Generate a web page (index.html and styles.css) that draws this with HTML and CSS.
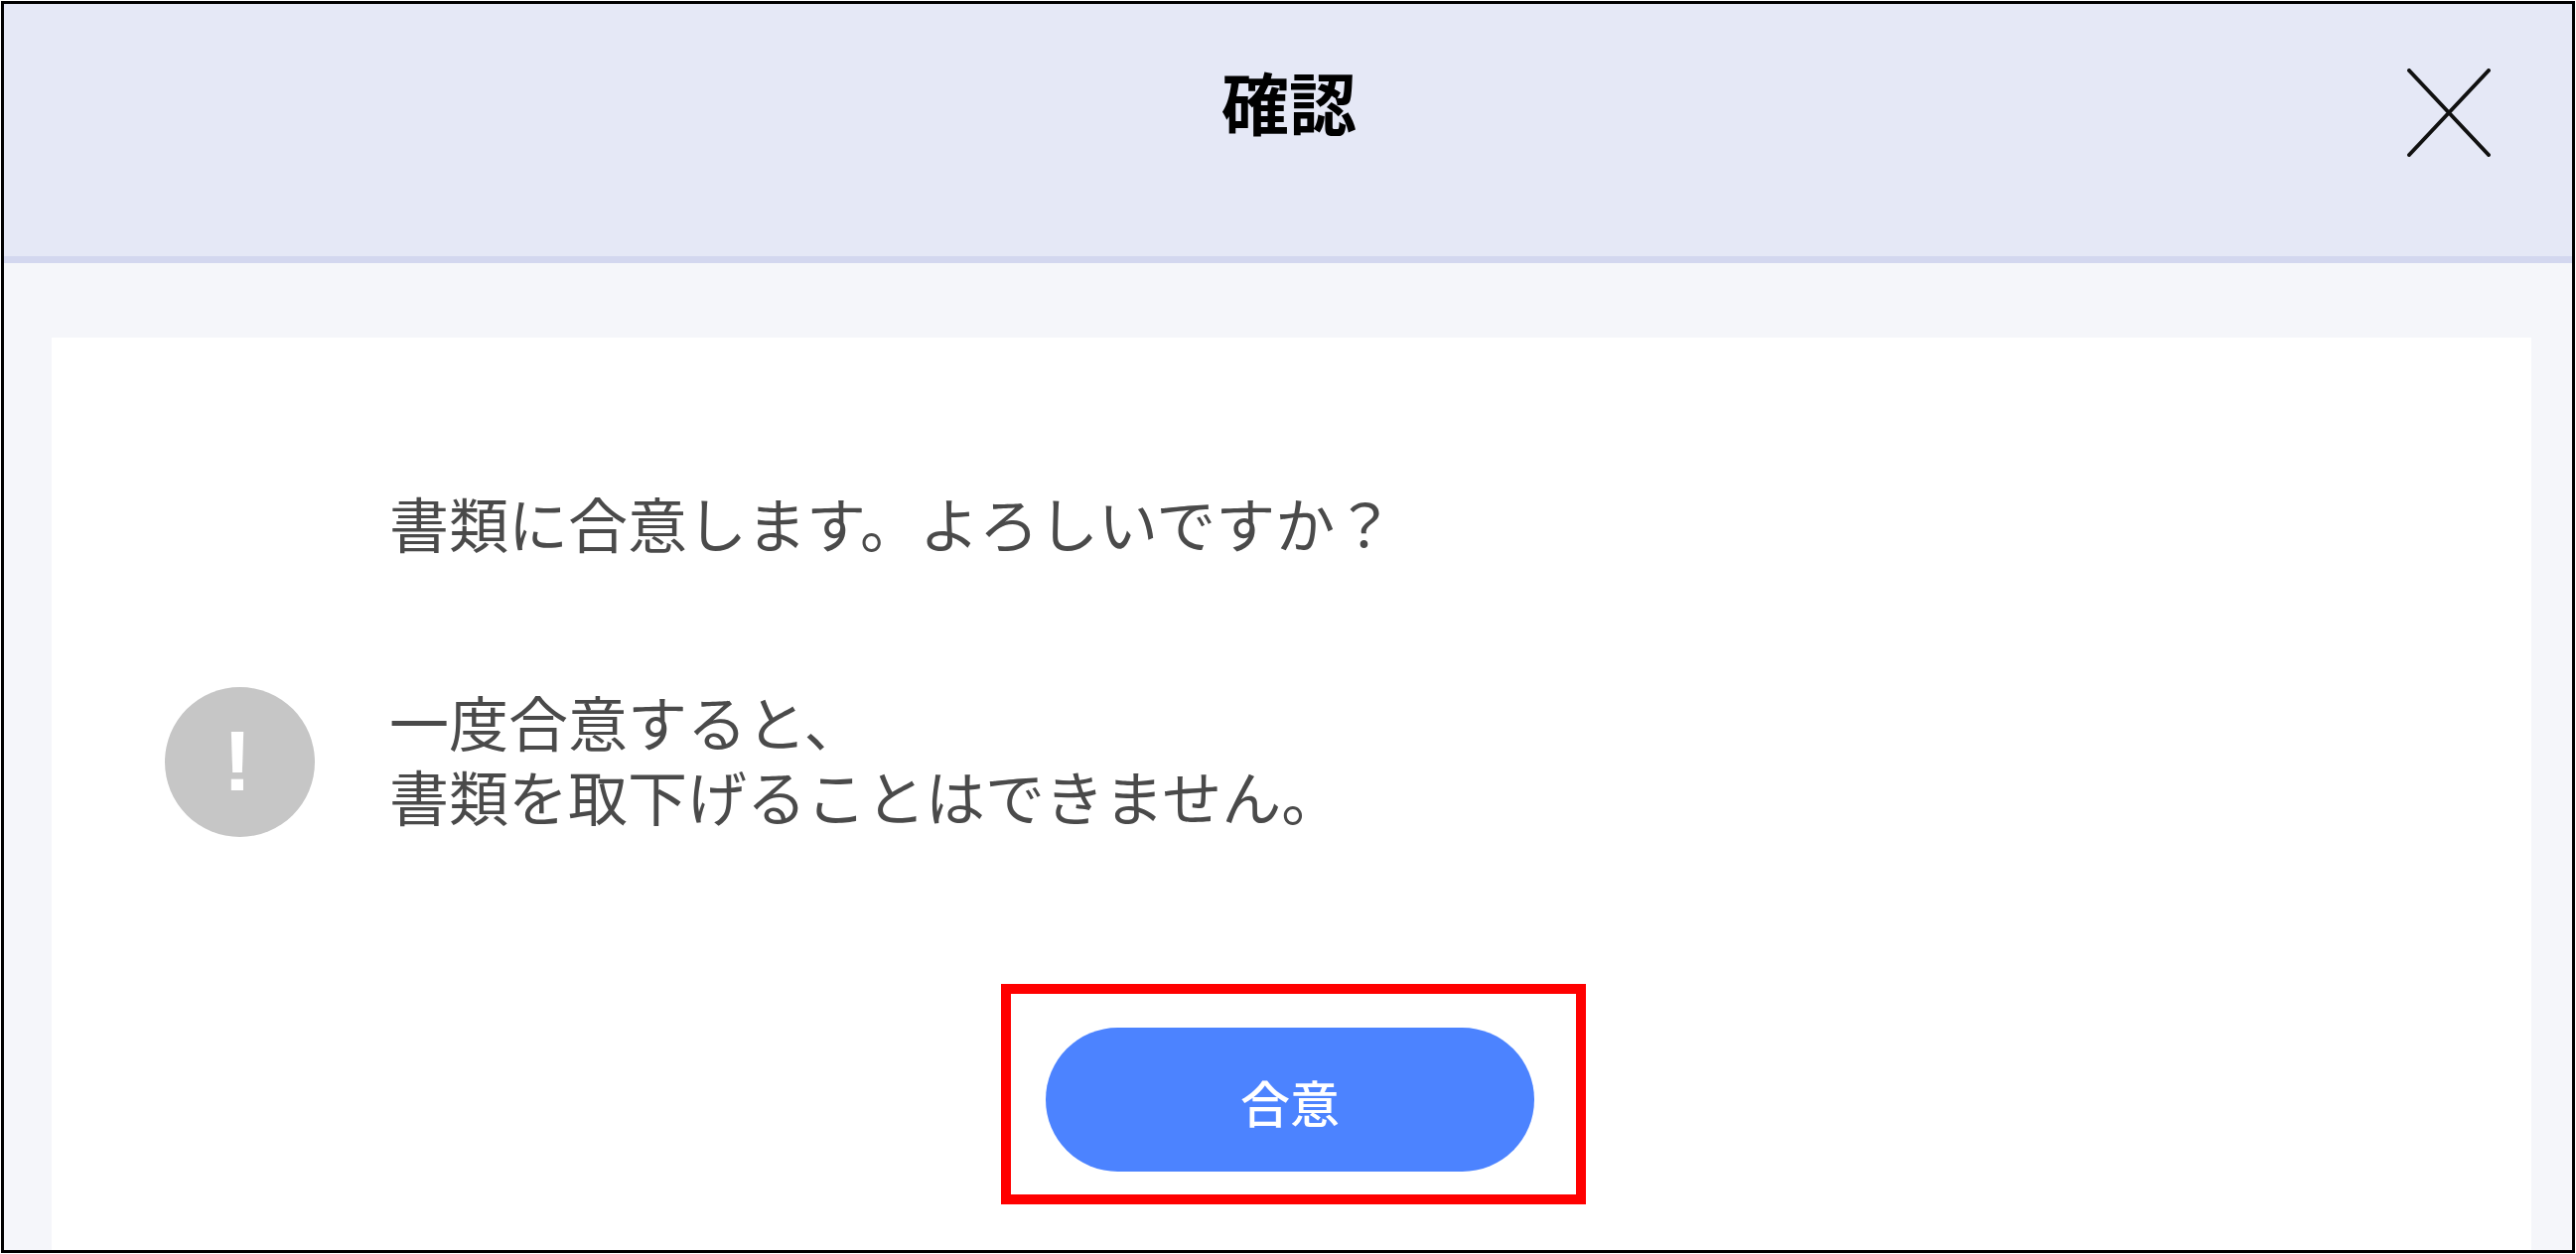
FILE: index.html
```html
<!DOCTYPE html>
<html lang="ja">
<head>
<meta charset="utf-8">
<title>確認</title>
<link rel="stylesheet" href="styles.css">
</head>
<body>
<div class="dialog">
  <header class="header">
    <h1 class="title">確認</h1>
    <button class="close" type="button" aria-label="閉じる">
      <svg class="close-icon" viewBox="0 0 84 89" aria-hidden="true">
        <path d="M2 2 L82 87 M82 2 L2 87"/>
      </svg>
    </button>
  </header>
  <main class="body">
    <section class="panel">
      <p class="message lead">書類に合意します。よろしいですか？</p>
      <div class="notice">
        <span class="notice-icon">!</span>
        <p class="message">一度合意すると、<br>書類を取下げることはできません。</p>
      </div>
      <div class="actions">
        <div class="highlight-wrap">
          <button class="agree" type="button">合意</button>
          <span class="highlight"></span>
        </div>
      </div>
    </section>
  </main>
</div>
</body>
</html>
```
FILE: styles.css
```css
* { box-sizing: border-box; }
html, body { margin: 0; height: 100%; background: #fff; }
body {
  padding: 1px;
  font-family: "Noto Sans CJK JP", "Noto Sans", sans-serif;
  overflow: hidden;
}
.dialog {
  display: flex;
  flex-direction: column;
  width: 2592px;
  height: 1261px;
  border: 3px solid #000;
  background: #f5f6fa;
  overflow: hidden;
}
.header {
  display: grid;
  grid-template-columns: 1fr auto 1fr;
  align-items: start;
  flex: none;
  height: 261px;
  background: #e5e8f6;
  border-bottom: 7px solid #d3d7ef;
}
.title {
  grid-column: 2;
  margin: 52px 0 0 2px;
  font-size: 68px;
  line-height: 92px;
  font-weight: 700;
  color: #000;
}
.close {
  grid-column: 3;
  justify-self: end;
  margin: 65px 82px 0 0;
  padding: 0;
  width: 84px;
  height: 89px;
  border: 0;
  background: none;
}
.close-icon {
  display: block;
  width: 84px;
  height: 89px;
  fill: none;
  stroke: #111;
  stroke-width: 4;
  stroke-linecap: round;
}
.body {
  flex: 1;
  display: flex;
  min-height: 0;
  padding: 75px 41px 0 48px;
}
.panel {
  flex: 1;
  display: flex;
  flex-direction: column;
  padding: 148px 0 0 114px;
  background: #fff;
}
.message {
  margin: 0;
  font-size: 60px;
  line-height: 75px;
  font-weight: 400;
  color: #4a4a4a;
}
.lead { margin-left: 226px; }
.notice {
  display: flex;
  align-items: flex-start;
  gap: 75px;
  margin-top: 125px;
}
.notice-icon {
  display: flex;
  flex: none;
  align-items: center;
  justify-content: center;
  width: 151px;
  height: 151px;
  margin-top: 4px;
  padding: 0 5px 3px 0;
  border-radius: 50%;
  background: #c6c6c6;
  color: #fff;
  font-family: "Liberation Sans", sans-serif;
  font-size: 86px;
  font-weight: 700;
  line-height: 1;
}
.actions {
  display: flex;
  justify-content: center;
  margin-top: 192px;
  margin-right: 117px;
}
.highlight-wrap { position: relative; }
.agree {
  display: block;
  width: 492px;
  height: 145px;
  padding: 3px 0 0;
  border: 0;
  border-radius: 73px;
  background: #4c83ff;
  color: #fff;
  font-family: inherit;
  font-size: 50px;
  font-weight: 500;
}
.highlight {
  position: absolute;
  left: -45px;
  top: -44px;
  width: 589px;
  height: 222px;
  border: 10px solid #f00;
}
```
